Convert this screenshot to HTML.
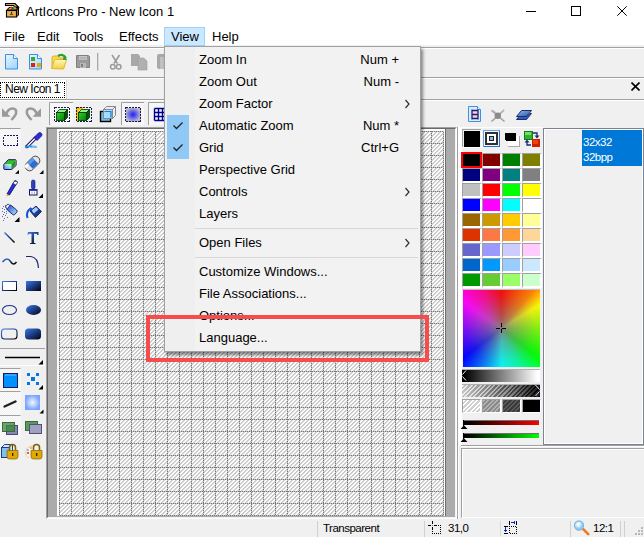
<!DOCTYPE html>
<html><head><meta charset="utf-8">
<style>
*{margin:0;padding:0;box-sizing:border-box}
html,body{width:644px;height:537px;overflow:hidden;background:#f0f0f0;font-family:"Liberation Sans",sans-serif;font-size:12px;color:#000;position:relative}
.a{position:absolute}
.t{position:absolute;white-space:nowrap;line-height:1}
.mi{position:absolute;left:199px;font-size:13px;white-space:nowrap;line-height:1}
.sc{position:absolute;font-size:13px;white-space:nowrap;line-height:1;text-align:right;right:245px}
.sw{position:absolute;width:20px;height:15px;border-top:1px solid #a0a0a0;border-left:1px solid #a0a0a0;border-right:2px solid #fff;border-bottom:2px solid #fff}
</style></head><body>
<div class="a" style="left:0;top:0;width:644px;height:45px;background:#fff"></div>
<svg class="a" style="left:0;top:0" width="24" height="22">
<path d="M5.5 3.5h9.5l3.5 3.5h-4l-1-1.5H5.5z" fill="#e0a848" stroke="#000" stroke-width="1.1"/>
<path d="M6.5 10.5l2.5-3h9.5l-2 3z" fill="#6a4a10" stroke="#000" stroke-width="1"/>
<circle cx="11.3" cy="7.5" r="1" fill="#ff2020"/><circle cx="13.6" cy="7.5" r="1" fill="#20d020"/><circle cx="10.3" cy="8.8" r="1" fill="#f0e000"/><circle cx="10.5" cy="9.7" r="0.9" fill="#f02020"/><circle cx="12.3" cy="9.5" r="1" fill="#2040ff"/><circle cx="15" cy="8" r="0.8" fill="#fff"/>
<path d="M16.5 10.5l2-3v7.5l-2 2z" fill="#b07818" stroke="#000" stroke-width="1"/>
<rect x="6.5" y="10.5" width="10" height="6.5" fill="#e8b050" stroke="#000" stroke-width="1.1"/>
<path d="M10.3 14.5q1.2-2.5 2.4 0z" fill="#e0e000" stroke="#000" stroke-width="0.6"/><circle cx="11.5" cy="12.3" r="0.6" fill="#000"/>
</svg>
<div class="t" style="left:26px;top:5px;font-size:13px">ArtIcons Pro - New Icon 1</div>
<!-- window controls -->
<div class="a" style="left:526px;top:11px;width:10px;height:1px;background:#000"></div>
<div class="a" style="left:571px;top:6px;width:10px;height:10px;border:1px solid #000"></div>
<svg class="a" style="left:617px;top:6px" width="10" height="10"><path d="M0.3 0.3L9.7 9.7M9.7 0.3L0.3 9.7" stroke="#000" stroke-width="1"/></svg>
<!-- menu -->
<div class="a" style="left:164px;top:27px;width:41px;height:19px;background:#cce8ff;border:1px solid #99d1ff"></div>
<div class="t" style="left:4px;top:30px;font-size:13px">File</div>
<div class="t" style="left:37px;top:30px;font-size:13px">Edit</div>
<div class="t" style="left:73px;top:30px;font-size:13px">Tools</div>
<div class="t" style="left:119px;top:30px;font-size:13px">Effects</div>
<div class="t" style="left:171px;top:30px;font-size:13px">View</div>
<div class="t" style="left:212px;top:30px;font-size:13px">Help</div>
<!-- lines -->
<div class="a" style="left:0;top:47px;width:644px;height:1px;background:#a0a0a0"></div>
<div class="a" style="left:0;top:48px;width:644px;height:1px;background:#fff"></div>
<div class="a" style="left:0;top:77px;width:644px;height:1px;background:#a0a0a0"></div>
<div class="a" style="left:0;top:78px;width:644px;height:1px;background:#fff"></div>
<div class="a" style="left:0;top:99px;width:644px;height:1px;background:#a0a0a0"></div>
<div class="a" style="left:0;top:100px;width:644px;height:1px;background:#fff"></div>
<!-- toolbar 1 icons -->
<svg class="a" style="left:0;top:48px" width="170" height="28">
<defs>
<linearGradient id="dg" x1="0" y1="0" x2="0.6" y2="1"><stop offset="0" stop-color="#e8f6ff"/><stop offset="1" stop-color="#a8d8ff"/></linearGradient>
<linearGradient id="fg" x1="0" y1="0" x2="0" y2="1"><stop offset="0" stop-color="#fff8c0"/><stop offset="1" stop-color="#f0d040"/></linearGradient>
</defs>
<path d="M5.5 6.5h8l4 4v10.5h-12z" fill="url(#dg)" stroke="#3a90e0"/>
<path d="M13.5 6.5v4h4" fill="#fff" stroke="#3a90e0"/>
<path d="M29.5 6.5h8l4 4v10.5h-12z" fill="url(#dg)" stroke="#3a90e0"/>
<path d="M37.5 6.5v4h4" fill="#fff" stroke="#3a90e0"/>
<rect x="31" y="9" width="4" height="4" fill="#30b030"/><rect x="31" y="15" width="4" height="4" fill="#e02010"/><rect x="37" y="15" width="4" height="4" fill="#e8a800"/>
<path d="M52 10q0-2 2-2h4l2 2h4v9.5H52z" fill="#f8d850" stroke="#e0b020"/>
<path d="M51.5 20.5l3-8q0.5-1 2-1h10l-3 9.5z" fill="url(#fg)" stroke="#e8b820"/>
<path d="M58 8q5-3 8 2" fill="none" stroke="#30a030" stroke-width="2.2"/><path d="M64 7l3 5-4 0z" fill="#30a030"/>
<path d="M76.5 7.5h12l1 1v11h-13z" fill="#9a9a9a" stroke="#808080"/>
<rect x="79" y="8" width="8" height="4" fill="#c8c8c8"/><path d="M79.5 9.5h7M79.5 11h7" stroke="#a0a0a0" stroke-width="0.6"/>
<rect x="80" y="15" width="6" height="5" fill="#b8b8b8"/><rect x="81" y="16" width="2" height="3" fill="#808080"/>
<rect x="97" y="5" width="1.3" height="17.5" fill="#a8a8a8"/>
<path d="M112 7l5.5 8.5M119.5 7l-5.5 8.5" stroke="#9a9a9a" stroke-width="1.6"/>
<circle cx="112.8" cy="18.8" r="2.3" fill="none" stroke="#9a9a9a" stroke-width="1.5"/><circle cx="118.7" cy="18.8" r="2.3" fill="none" stroke="#9a9a9a" stroke-width="1.5"/>
<path d="M131 6h7l2 2v10h-9z" fill="#a8a8a8"/><path d="M138 10h6l3 3v9h-9z" fill="#b0b0b0" stroke="#a0a0a0" stroke-width="0.6"/>
<path d="M157 8q0-2 2-2h8v15h-8q-2 0-2-2z" fill="#a8a8a8"/><rect x="160" y="9" width="5" height="12" fill="#c0c0c0"/>
</svg>
<!-- tab -->
<div class="a" style="left:0;top:80px;width:67px;height:19px;background:#fff;border-right:1px solid #d8d8d8"></div>
<div class="a" style="left:0;top:82px;width:65px;height:16px;border:1px dotted #000"></div>
<div class="t" style="left:5px;top:83px;font-size:12px;letter-spacing:-0.5px">New Icon 1</div>
<svg class="a" style="left:631px;top:82px" width="9" height="9"><path d="M0.5 0.5L8.5 8.5M8.5 0.5L0.5 8.5" stroke="#000" stroke-width="1.6"/></svg>
<!-- toolbar 2 -->
<svg class="a" style="left:0;top:100px" width="170" height="27">
<defs>
<pattern id="dith" width="2" height="2" patternUnits="userSpaceOnUse"><rect width="2" height="2" fill="#fbfbfb"/><rect width="1" height="1" fill="#f2f2f2"/><rect x="1" y="1" width="1" height="1" fill="#f2f2f2"/></pattern>
<radialGradient id="bd"><stop offset="0" stop-color="#2020ff"/><stop offset="0.35" stop-color="#5050f0"/><stop offset="1" stop-color="#b8b8c8"/></radialGradient>
<linearGradient id="cf" x1="0" y1="0" x2="1" y2="1"><stop offset="0" stop-color="#30d030"/><stop offset="1" stop-color="#008000"/></linearGradient>
</defs>
<path d="M2 8.2v8.5h8.5z" fill="#9a9a9a"/>
<path d="M6 14.5q2-6 6.5-6t3.5 5q-0.5 2-4.5 6.5" fill="none" stroke="#9a9a9a" stroke-width="2.6"/>
<path d="M41 8.2v8.5h-8.5z" fill="#9a9a9a"/>
<path d="M37 14.5q-2-6-6.5-6t-3.5 5q0.5 2 4.5 6.5" fill="none" stroke="#9a9a9a" stroke-width="2.6"/>
<rect x="49" y="2" width="24" height="23" fill="url(#dith)"/>
<path d="M49.5 25V2.5H73" fill="none" stroke="#a0a0a0"/>
<rect x="54.5" y="7.5" width="15" height="14" fill="none" stroke="#1a1a5a" stroke-dasharray="2 1" shape-rendering="crispEdges"/>
<path d="M56.5 12.5l3-3h8l-3 3z" fill="#90f090" stroke="#003000" stroke-width="0.8"/><path d="M64.5 12.5l3-3v8l-3 3z" fill="#005800" stroke="#003000" stroke-width="0.8"/><rect x="56.5" y="12.5" width="8" height="8" fill="url(#cf)" stroke="#003000" stroke-width="0.8"/>
<path d="M76 7h7v3h-4v11h-3z" fill="#ffc000"/>
<rect x="76.5" y="7.5" width="15" height="14" fill="none" stroke="#1a1a5a" stroke-dasharray="2 1" shape-rendering="crispEdges"/>
<path d="M78.5 12.5l3-3h8l-3 3z" fill="#90f090" stroke="#003000" stroke-width="0.8"/><path d="M86.5 12.5l3-3v8l-3 3z" fill="#005800" stroke="#003000" stroke-width="0.8"/><rect x="78.5" y="12.5" width="8" height="8" fill="url(#cf)" stroke="#003000" stroke-width="0.8"/>
<rect x="100.5" y="11.5" width="10" height="10" fill="#70b8f0" stroke="#000" stroke-width="1.4"/>
<path d="M103.5 9.5l3-3h9l-3 3z" fill="#f4e8f8" stroke="#888"/>
<path d="M112.5 9.5l3-3v9l-3 3z" fill="#e0f0ff" stroke="#888"/>
<rect x="103.5" y="9.5" width="9" height="9" fill="#a8e4ff" fill-opacity="0.9" stroke="#888"/>
<path d="M104.5 11.5h6.5v6" fill="none" stroke="#1a78e0" stroke-width="1.2"/>
<rect x="121" y="2" width="23" height="23" fill="url(#dith)"/>
<path d="M121.5 25V2.5H144" fill="none" stroke="#a0a0a0"/>
<rect x="125.5" y="7.5" width="15" height="14" fill="url(#bd)" stroke="#1a1a5a" stroke-dasharray="2 1" shape-rendering="crispEdges"/>
<rect x="148" y="2" width="22" height="23" fill="url(#dith)"/>
<path d="M148.5 25V2.5H170" fill="none" stroke="#a0a0a0"/>
<path d="M154.5 8.5v12M158.5 8.5v12M162.5 8.5v12M154.5 8.5h12M154.5 12.5h12M154.5 16.5h12M154.5 20.5h12" stroke="#000090" stroke-width="1.4" fill="none"/>
</svg>
<!-- canvas frame -->
<div class="a" style="left:46px;top:127px;width:411px;height:392px;border-top:1px solid #a0a0a0;border-left:1px solid #a0a0a0;border-right:1px solid #fff;border-bottom:1px solid #fff"></div>
<div class="a" style="left:47px;top:128px;width:409px;height:390px;background:#ababab;border-top:1px solid #696969;border-left:1px solid #696969;border-right:1px solid #f4f4f4;border-bottom:1px solid #f4f4f4"></div>
<div class="a" style="left:57px;top:129px;width:388px;height:387px;background:#fff"></div>
<div class="a" style="left:445px;top:129px;width:1px;height:387px;background:#6e6e6e"></div>
<svg class="a" style="left:59px;top:131px" width="385" height="385" shape-rendering="crispEdges">
<defs><pattern id="gp" width="24" height="24" patternUnits="userSpaceOnUse"><path fill="#c8c8c8" d="M1 4h1v1h-1zM1 8h1v1h-1zM1 16h1v1h-1zM1 20h1v1h-1zM2 3h1v1h-1zM2 7h1v1h-1zM2 11h1v1h-1zM2 15h1v1h-1zM2 19h1v1h-1zM2 23h1v1h-1zM3 2h1v1h-1zM3 6h1v1h-1zM3 10h1v1h-1zM3 14h1v1h-1zM3 18h1v1h-1zM3 22h1v1h-1zM4 1h1v1h-1zM4 5h1v1h-1zM4 9h1v1h-1zM4 13h1v1h-1zM4 17h1v1h-1zM4 21h1v1h-1zM5 4h1v1h-1zM5 8h1v1h-1zM5 16h1v1h-1zM5 20h1v1h-1zM6 3h1v1h-1zM6 7h1v1h-1zM6 11h1v1h-1zM6 15h1v1h-1zM6 19h1v1h-1zM6 23h1v1h-1zM7 2h1v1h-1zM7 6h1v1h-1zM7 10h1v1h-1zM7 14h1v1h-1zM7 18h1v1h-1zM7 22h1v1h-1zM8 1h1v1h-1zM8 5h1v1h-1zM8 9h1v1h-1zM8 13h1v1h-1zM8 17h1v1h-1zM8 21h1v1h-1zM9 4h1v1h-1zM9 8h1v1h-1zM9 16h1v1h-1zM9 20h1v1h-1zM10 3h1v1h-1zM10 7h1v1h-1zM10 11h1v1h-1zM10 15h1v1h-1zM10 19h1v1h-1zM10 23h1v1h-1zM11 2h1v1h-1zM11 6h1v1h-1zM11 10h1v1h-1zM11 14h1v1h-1zM11 18h1v1h-1zM11 22h1v1h-1zM13 4h1v1h-1zM13 8h1v1h-1zM13 16h1v1h-1zM13 20h1v1h-1zM14 3h1v1h-1zM14 7h1v1h-1zM14 11h1v1h-1zM14 15h1v1h-1zM14 19h1v1h-1zM14 23h1v1h-1zM15 2h1v1h-1zM15 6h1v1h-1zM15 10h1v1h-1zM15 14h1v1h-1zM15 18h1v1h-1zM15 22h1v1h-1zM16 1h1v1h-1zM16 5h1v1h-1zM16 9h1v1h-1zM16 13h1v1h-1zM16 17h1v1h-1zM16 21h1v1h-1zM17 4h1v1h-1zM17 8h1v1h-1zM17 16h1v1h-1zM17 20h1v1h-1zM18 3h1v1h-1zM18 7h1v1h-1zM18 11h1v1h-1zM18 15h1v1h-1zM18 19h1v1h-1zM18 23h1v1h-1zM19 2h1v1h-1zM19 6h1v1h-1zM19 10h1v1h-1zM19 14h1v1h-1zM19 18h1v1h-1zM19 22h1v1h-1zM20 1h1v1h-1zM20 5h1v1h-1zM20 9h1v1h-1zM20 13h1v1h-1zM20 17h1v1h-1zM20 21h1v1h-1zM21 4h1v1h-1zM21 8h1v1h-1zM21 16h1v1h-1zM21 20h1v1h-1zM22 3h1v1h-1zM22 7h1v1h-1zM22 11h1v1h-1zM22 15h1v1h-1zM22 19h1v1h-1zM22 23h1v1h-1zM23 2h1v1h-1zM23 6h1v1h-1zM23 10h1v1h-1zM23 14h1v1h-1zM23 18h1v1h-1zM23 22h1v1h-1z"/><path fill="#d2d2d2" d="M1 1h1v1h-1zM1 5h1v1h-1zM1 9h1v1h-1zM1 13h1v1h-1zM1 17h1v1h-1zM1 21h1v1h-1zM2 4h1v1h-1zM2 8h1v1h-1zM2 16h1v1h-1zM2 20h1v1h-1zM3 3h1v1h-1zM3 7h1v1h-1zM3 11h1v1h-1zM3 15h1v1h-1zM3 19h1v1h-1zM3 23h1v1h-1zM4 2h1v1h-1zM4 6h1v1h-1zM4 10h1v1h-1zM4 14h1v1h-1zM4 18h1v1h-1zM4 22h1v1h-1zM5 1h1v1h-1zM5 5h1v1h-1zM5 9h1v1h-1zM5 13h1v1h-1zM5 17h1v1h-1zM5 21h1v1h-1zM6 4h1v1h-1zM6 8h1v1h-1zM6 16h1v1h-1zM6 20h1v1h-1zM7 3h1v1h-1zM7 7h1v1h-1zM7 11h1v1h-1zM7 15h1v1h-1zM7 19h1v1h-1zM7 23h1v1h-1zM8 2h1v1h-1zM8 6h1v1h-1zM8 10h1v1h-1zM8 14h1v1h-1zM8 18h1v1h-1zM8 22h1v1h-1zM9 1h1v1h-1zM9 5h1v1h-1zM9 9h1v1h-1zM9 13h1v1h-1zM9 17h1v1h-1zM9 21h1v1h-1zM10 4h1v1h-1zM10 8h1v1h-1zM10 16h1v1h-1zM10 20h1v1h-1zM11 3h1v1h-1zM11 7h1v1h-1zM11 11h1v1h-1zM11 15h1v1h-1zM11 19h1v1h-1zM11 23h1v1h-1zM13 1h1v1h-1zM13 5h1v1h-1zM13 9h1v1h-1zM13 13h1v1h-1zM13 17h1v1h-1zM13 21h1v1h-1zM14 4h1v1h-1zM14 8h1v1h-1zM14 16h1v1h-1zM14 20h1v1h-1zM15 3h1v1h-1zM15 7h1v1h-1zM15 11h1v1h-1zM15 15h1v1h-1zM15 19h1v1h-1zM15 23h1v1h-1zM16 2h1v1h-1zM16 6h1v1h-1zM16 10h1v1h-1zM16 14h1v1h-1zM16 18h1v1h-1zM16 22h1v1h-1zM17 1h1v1h-1zM17 5h1v1h-1zM17 9h1v1h-1zM17 13h1v1h-1zM17 17h1v1h-1zM17 21h1v1h-1zM18 4h1v1h-1zM18 8h1v1h-1zM18 16h1v1h-1zM18 20h1v1h-1zM19 3h1v1h-1zM19 7h1v1h-1zM19 11h1v1h-1zM19 15h1v1h-1zM19 19h1v1h-1zM19 23h1v1h-1zM20 2h1v1h-1zM20 6h1v1h-1zM20 10h1v1h-1zM20 14h1v1h-1zM20 18h1v1h-1zM20 22h1v1h-1zM21 1h1v1h-1zM21 5h1v1h-1zM21 9h1v1h-1zM21 13h1v1h-1zM21 17h1v1h-1zM21 21h1v1h-1zM22 4h1v1h-1zM22 8h1v1h-1zM22 16h1v1h-1zM22 20h1v1h-1zM23 3h1v1h-1zM23 7h1v1h-1zM23 11h1v1h-1zM23 15h1v1h-1zM23 19h1v1h-1zM23 23h1v1h-1z"/><path fill="#fafafa" d="M1 2h1v1h-1zM1 6h1v1h-1zM1 10h1v1h-1zM1 14h1v1h-1zM1 18h1v1h-1zM1 22h1v1h-1zM2 1h1v1h-1zM2 5h1v1h-1zM2 9h1v1h-1zM2 13h1v1h-1zM2 17h1v1h-1zM2 21h1v1h-1zM3 4h1v1h-1zM3 8h1v1h-1zM3 16h1v1h-1zM3 20h1v1h-1zM4 3h1v1h-1zM4 7h1v1h-1zM4 11h1v1h-1zM4 15h1v1h-1zM4 19h1v1h-1zM4 23h1v1h-1zM5 2h1v1h-1zM5 6h1v1h-1zM5 10h1v1h-1zM5 14h1v1h-1zM5 18h1v1h-1zM5 22h1v1h-1zM6 1h1v1h-1zM6 5h1v1h-1zM6 9h1v1h-1zM6 13h1v1h-1zM6 17h1v1h-1zM6 21h1v1h-1zM7 4h1v1h-1zM7 8h1v1h-1zM7 16h1v1h-1zM7 20h1v1h-1zM8 3h1v1h-1zM8 7h1v1h-1zM8 11h1v1h-1zM8 15h1v1h-1zM8 19h1v1h-1zM8 23h1v1h-1zM9 2h1v1h-1zM9 6h1v1h-1zM9 10h1v1h-1zM9 14h1v1h-1zM9 18h1v1h-1zM9 22h1v1h-1zM10 1h1v1h-1zM10 5h1v1h-1zM10 9h1v1h-1zM10 13h1v1h-1zM10 17h1v1h-1zM10 21h1v1h-1zM11 4h1v1h-1zM11 8h1v1h-1zM11 16h1v1h-1zM11 20h1v1h-1zM13 2h1v1h-1zM13 6h1v1h-1zM13 10h1v1h-1zM13 14h1v1h-1zM13 18h1v1h-1zM13 22h1v1h-1zM14 1h1v1h-1zM14 5h1v1h-1zM14 9h1v1h-1zM14 13h1v1h-1zM14 17h1v1h-1zM14 21h1v1h-1zM15 4h1v1h-1zM15 8h1v1h-1zM15 16h1v1h-1zM15 20h1v1h-1zM16 3h1v1h-1zM16 7h1v1h-1zM16 11h1v1h-1zM16 15h1v1h-1zM16 19h1v1h-1zM16 23h1v1h-1zM17 2h1v1h-1zM17 6h1v1h-1zM17 10h1v1h-1zM17 14h1v1h-1zM17 18h1v1h-1zM17 22h1v1h-1zM18 1h1v1h-1zM18 5h1v1h-1zM18 9h1v1h-1zM18 13h1v1h-1zM18 17h1v1h-1zM18 21h1v1h-1zM19 4h1v1h-1zM19 8h1v1h-1zM19 16h1v1h-1zM19 20h1v1h-1zM20 3h1v1h-1zM20 7h1v1h-1zM20 11h1v1h-1zM20 15h1v1h-1zM20 19h1v1h-1zM20 23h1v1h-1zM21 2h1v1h-1zM21 6h1v1h-1zM21 10h1v1h-1zM21 14h1v1h-1zM21 18h1v1h-1zM21 22h1v1h-1zM22 1h1v1h-1zM22 5h1v1h-1zM22 9h1v1h-1zM22 13h1v1h-1zM22 17h1v1h-1zM22 21h1v1h-1zM23 4h1v1h-1zM23 8h1v1h-1zM23 16h1v1h-1zM23 20h1v1h-1z"/><path fill="#c4c4c4" d="M0 0h1v1h-1zM0 2h1v1h-1zM0 4h1v1h-1zM0 6h1v1h-1zM0 8h1v1h-1zM0 10h1v1h-1zM0 14h1v1h-1zM0 16h1v1h-1zM0 18h1v1h-1zM0 20h1v1h-1zM0 22h1v1h-1zM1 12h1v1h-1zM2 0h1v1h-1zM3 12h1v1h-1zM4 0h1v1h-1zM5 12h1v1h-1zM6 0h1v1h-1zM7 12h1v1h-1zM8 0h1v1h-1zM9 12h1v1h-1zM10 0h1v1h-1zM11 12h1v1h-1zM12 1h1v1h-1zM12 3h1v1h-1zM12 5h1v1h-1zM12 7h1v1h-1zM12 9h1v1h-1zM12 11h1v1h-1zM12 13h1v1h-1zM12 15h1v1h-1zM12 17h1v1h-1zM12 19h1v1h-1zM12 21h1v1h-1zM12 23h1v1h-1zM13 12h1v1h-1zM14 0h1v1h-1zM15 12h1v1h-1zM16 0h1v1h-1zM17 12h1v1h-1zM18 0h1v1h-1zM19 12h1v1h-1zM20 0h1v1h-1zM21 12h1v1h-1zM22 0h1v1h-1zM23 12h1v1h-1z"/><path fill="#767676" d="M0 1h1v1h-1zM0 3h1v1h-1zM0 5h1v1h-1zM0 7h1v1h-1zM0 9h1v1h-1zM0 11h1v1h-1zM0 12h1v1h-1zM0 13h1v1h-1zM0 15h1v1h-1zM0 17h1v1h-1zM0 19h1v1h-1zM0 21h1v1h-1zM0 23h1v1h-1zM1 0h1v1h-1zM2 12h1v1h-1zM3 0h1v1h-1zM4 12h1v1h-1zM5 0h1v1h-1zM6 12h1v1h-1zM7 0h1v1h-1zM8 12h1v1h-1zM9 0h1v1h-1zM10 12h1v1h-1zM11 0h1v1h-1zM12 0h1v1h-1zM12 2h1v1h-1zM12 4h1v1h-1zM12 6h1v1h-1zM12 8h1v1h-1zM12 10h1v1h-1zM12 12h1v1h-1zM12 14h1v1h-1zM12 16h1v1h-1zM12 18h1v1h-1zM12 20h1v1h-1zM12 22h1v1h-1zM13 0h1v1h-1zM14 12h1v1h-1zM15 0h1v1h-1zM16 12h1v1h-1zM17 0h1v1h-1zM18 12h1v1h-1zM19 0h1v1h-1zM20 12h1v1h-1zM21 0h1v1h-1zM22 12h1v1h-1zM23 0h1v1h-1z"/></pattern></defs>
<rect width="384" height="384" fill="url(#gp)"/>
<path fill="#c4c4c4" d="M0 384h1v1h-1zM2 384h1v1h-1zM4 384h1v1h-1zM6 384h1v1h-1zM8 384h1v1h-1zM10 384h1v1h-1zM12 384h1v1h-1zM14 384h1v1h-1zM16 384h1v1h-1zM18 384h1v1h-1zM20 384h1v1h-1zM22 384h1v1h-1zM24 384h1v1h-1zM26 384h1v1h-1zM28 384h1v1h-1zM30 384h1v1h-1zM32 384h1v1h-1zM34 384h1v1h-1zM36 384h1v1h-1zM38 384h1v1h-1zM40 384h1v1h-1zM42 384h1v1h-1zM44 384h1v1h-1zM46 384h1v1h-1zM48 384h1v1h-1zM50 384h1v1h-1zM52 384h1v1h-1zM54 384h1v1h-1zM56 384h1v1h-1zM58 384h1v1h-1zM60 384h1v1h-1zM62 384h1v1h-1zM64 384h1v1h-1zM66 384h1v1h-1zM68 384h1v1h-1zM70 384h1v1h-1zM72 384h1v1h-1zM74 384h1v1h-1zM76 384h1v1h-1zM78 384h1v1h-1zM80 384h1v1h-1zM82 384h1v1h-1zM84 384h1v1h-1zM86 384h1v1h-1zM88 384h1v1h-1zM90 384h1v1h-1zM92 384h1v1h-1zM94 384h1v1h-1zM96 384h1v1h-1zM98 384h1v1h-1zM100 384h1v1h-1zM102 384h1v1h-1zM104 384h1v1h-1zM106 384h1v1h-1zM108 384h1v1h-1zM110 384h1v1h-1zM112 384h1v1h-1zM114 384h1v1h-1zM116 384h1v1h-1zM118 384h1v1h-1zM120 384h1v1h-1zM122 384h1v1h-1zM124 384h1v1h-1zM126 384h1v1h-1zM128 384h1v1h-1zM130 384h1v1h-1zM132 384h1v1h-1zM134 384h1v1h-1zM136 384h1v1h-1zM138 384h1v1h-1zM140 384h1v1h-1zM142 384h1v1h-1zM144 384h1v1h-1zM146 384h1v1h-1zM148 384h1v1h-1zM150 384h1v1h-1zM152 384h1v1h-1zM154 384h1v1h-1zM156 384h1v1h-1zM158 384h1v1h-1zM160 384h1v1h-1zM162 384h1v1h-1zM164 384h1v1h-1zM166 384h1v1h-1zM168 384h1v1h-1zM170 384h1v1h-1zM172 384h1v1h-1zM174 384h1v1h-1zM176 384h1v1h-1zM178 384h1v1h-1zM180 384h1v1h-1zM182 384h1v1h-1zM184 384h1v1h-1zM186 384h1v1h-1zM188 384h1v1h-1zM190 384h1v1h-1zM192 384h1v1h-1zM194 384h1v1h-1zM196 384h1v1h-1zM198 384h1v1h-1zM200 384h1v1h-1zM202 384h1v1h-1zM204 384h1v1h-1zM206 384h1v1h-1zM208 384h1v1h-1zM210 384h1v1h-1zM212 384h1v1h-1zM214 384h1v1h-1zM216 384h1v1h-1zM218 384h1v1h-1zM220 384h1v1h-1zM222 384h1v1h-1zM224 384h1v1h-1zM226 384h1v1h-1zM228 384h1v1h-1zM230 384h1v1h-1zM232 384h1v1h-1zM234 384h1v1h-1zM236 384h1v1h-1zM238 384h1v1h-1zM240 384h1v1h-1zM242 384h1v1h-1zM244 384h1v1h-1zM246 384h1v1h-1zM248 384h1v1h-1zM250 384h1v1h-1zM252 384h1v1h-1zM254 384h1v1h-1zM256 384h1v1h-1zM258 384h1v1h-1zM260 384h1v1h-1zM262 384h1v1h-1zM264 384h1v1h-1zM266 384h1v1h-1zM268 384h1v1h-1zM270 384h1v1h-1zM272 384h1v1h-1zM274 384h1v1h-1zM276 384h1v1h-1zM278 384h1v1h-1zM280 384h1v1h-1zM282 384h1v1h-1zM284 384h1v1h-1zM286 384h1v1h-1zM288 384h1v1h-1zM290 384h1v1h-1zM292 384h1v1h-1zM294 384h1v1h-1zM296 384h1v1h-1zM298 384h1v1h-1zM300 384h1v1h-1zM302 384h1v1h-1zM304 384h1v1h-1zM306 384h1v1h-1zM308 384h1v1h-1zM310 384h1v1h-1zM312 384h1v1h-1zM314 384h1v1h-1zM316 384h1v1h-1zM318 384h1v1h-1zM320 384h1v1h-1zM322 384h1v1h-1zM324 384h1v1h-1zM326 384h1v1h-1zM328 384h1v1h-1zM330 384h1v1h-1zM332 384h1v1h-1zM334 384h1v1h-1zM336 384h1v1h-1zM338 384h1v1h-1zM340 384h1v1h-1zM342 384h1v1h-1zM344 384h1v1h-1zM346 384h1v1h-1zM348 384h1v1h-1zM350 384h1v1h-1zM352 384h1v1h-1zM354 384h1v1h-1zM356 384h1v1h-1zM358 384h1v1h-1zM360 384h1v1h-1zM362 384h1v1h-1zM364 384h1v1h-1zM366 384h1v1h-1zM368 384h1v1h-1zM370 384h1v1h-1zM372 384h1v1h-1zM374 384h1v1h-1zM376 384h1v1h-1zM378 384h1v1h-1zM380 384h1v1h-1zM382 384h1v1h-1zM384 384h1v1h-1zM384 0h1v1h-1zM384 2h1v1h-1zM384 4h1v1h-1zM384 6h1v1h-1zM384 8h1v1h-1zM384 10h1v1h-1zM384 12h1v1h-1zM384 14h1v1h-1zM384 16h1v1h-1zM384 18h1v1h-1zM384 20h1v1h-1zM384 22h1v1h-1zM384 24h1v1h-1zM384 26h1v1h-1zM384 28h1v1h-1zM384 30h1v1h-1zM384 32h1v1h-1zM384 34h1v1h-1zM384 36h1v1h-1zM384 38h1v1h-1zM384 40h1v1h-1zM384 42h1v1h-1zM384 44h1v1h-1zM384 46h1v1h-1zM384 48h1v1h-1zM384 50h1v1h-1zM384 52h1v1h-1zM384 54h1v1h-1zM384 56h1v1h-1zM384 58h1v1h-1zM384 60h1v1h-1zM384 62h1v1h-1zM384 64h1v1h-1zM384 66h1v1h-1zM384 68h1v1h-1zM384 70h1v1h-1zM384 72h1v1h-1zM384 74h1v1h-1zM384 76h1v1h-1zM384 78h1v1h-1zM384 80h1v1h-1zM384 82h1v1h-1zM384 84h1v1h-1zM384 86h1v1h-1zM384 88h1v1h-1zM384 90h1v1h-1zM384 92h1v1h-1zM384 94h1v1h-1zM384 96h1v1h-1zM384 98h1v1h-1zM384 100h1v1h-1zM384 102h1v1h-1zM384 104h1v1h-1zM384 106h1v1h-1zM384 108h1v1h-1zM384 110h1v1h-1zM384 112h1v1h-1zM384 114h1v1h-1zM384 116h1v1h-1zM384 118h1v1h-1zM384 120h1v1h-1zM384 122h1v1h-1zM384 124h1v1h-1zM384 126h1v1h-1zM384 128h1v1h-1zM384 130h1v1h-1zM384 132h1v1h-1zM384 134h1v1h-1zM384 136h1v1h-1zM384 138h1v1h-1zM384 140h1v1h-1zM384 142h1v1h-1zM384 144h1v1h-1zM384 146h1v1h-1zM384 148h1v1h-1zM384 150h1v1h-1zM384 152h1v1h-1zM384 154h1v1h-1zM384 156h1v1h-1zM384 158h1v1h-1zM384 160h1v1h-1zM384 162h1v1h-1zM384 164h1v1h-1zM384 166h1v1h-1zM384 168h1v1h-1zM384 170h1v1h-1zM384 172h1v1h-1zM384 174h1v1h-1zM384 176h1v1h-1zM384 178h1v1h-1zM384 180h1v1h-1zM384 182h1v1h-1zM384 184h1v1h-1zM384 186h1v1h-1zM384 188h1v1h-1zM384 190h1v1h-1zM384 192h1v1h-1zM384 194h1v1h-1zM384 196h1v1h-1zM384 198h1v1h-1zM384 200h1v1h-1zM384 202h1v1h-1zM384 204h1v1h-1zM384 206h1v1h-1zM384 208h1v1h-1zM384 210h1v1h-1zM384 212h1v1h-1zM384 214h1v1h-1zM384 216h1v1h-1zM384 218h1v1h-1zM384 220h1v1h-1zM384 222h1v1h-1zM384 224h1v1h-1zM384 226h1v1h-1zM384 228h1v1h-1zM384 230h1v1h-1zM384 232h1v1h-1zM384 234h1v1h-1zM384 236h1v1h-1zM384 238h1v1h-1zM384 240h1v1h-1zM384 242h1v1h-1zM384 244h1v1h-1zM384 246h1v1h-1zM384 248h1v1h-1zM384 250h1v1h-1zM384 252h1v1h-1zM384 254h1v1h-1zM384 256h1v1h-1zM384 258h1v1h-1zM384 260h1v1h-1zM384 262h1v1h-1zM384 264h1v1h-1zM384 266h1v1h-1zM384 268h1v1h-1zM384 270h1v1h-1zM384 272h1v1h-1zM384 274h1v1h-1zM384 276h1v1h-1zM384 278h1v1h-1zM384 280h1v1h-1zM384 282h1v1h-1zM384 284h1v1h-1zM384 286h1v1h-1zM384 288h1v1h-1zM384 290h1v1h-1zM384 292h1v1h-1zM384 294h1v1h-1zM384 296h1v1h-1zM384 298h1v1h-1zM384 300h1v1h-1zM384 302h1v1h-1zM384 304h1v1h-1zM384 306h1v1h-1zM384 308h1v1h-1zM384 310h1v1h-1zM384 312h1v1h-1zM384 314h1v1h-1zM384 316h1v1h-1zM384 318h1v1h-1zM384 320h1v1h-1zM384 322h1v1h-1zM384 324h1v1h-1zM384 326h1v1h-1zM384 328h1v1h-1zM384 330h1v1h-1zM384 332h1v1h-1zM384 334h1v1h-1zM384 336h1v1h-1zM384 338h1v1h-1zM384 340h1v1h-1zM384 342h1v1h-1zM384 344h1v1h-1zM384 346h1v1h-1zM384 348h1v1h-1zM384 350h1v1h-1zM384 352h1v1h-1zM384 354h1v1h-1zM384 356h1v1h-1zM384 358h1v1h-1zM384 360h1v1h-1zM384 362h1v1h-1zM384 364h1v1h-1zM384 366h1v1h-1zM384 368h1v1h-1zM384 370h1v1h-1zM384 372h1v1h-1zM384 374h1v1h-1zM384 376h1v1h-1zM384 378h1v1h-1zM384 380h1v1h-1zM384 382h1v1h-1zM384 384h1v1h-1z"/><path fill="#767676" d="M1 384h1v1h-1zM3 384h1v1h-1zM5 384h1v1h-1zM7 384h1v1h-1zM9 384h1v1h-1zM11 384h1v1h-1zM13 384h1v1h-1zM15 384h1v1h-1zM17 384h1v1h-1zM19 384h1v1h-1zM21 384h1v1h-1zM23 384h1v1h-1zM25 384h1v1h-1zM27 384h1v1h-1zM29 384h1v1h-1zM31 384h1v1h-1zM33 384h1v1h-1zM35 384h1v1h-1zM37 384h1v1h-1zM39 384h1v1h-1zM41 384h1v1h-1zM43 384h1v1h-1zM45 384h1v1h-1zM47 384h1v1h-1zM49 384h1v1h-1zM51 384h1v1h-1zM53 384h1v1h-1zM55 384h1v1h-1zM57 384h1v1h-1zM59 384h1v1h-1zM61 384h1v1h-1zM63 384h1v1h-1zM65 384h1v1h-1zM67 384h1v1h-1zM69 384h1v1h-1zM71 384h1v1h-1zM73 384h1v1h-1zM75 384h1v1h-1zM77 384h1v1h-1zM79 384h1v1h-1zM81 384h1v1h-1zM83 384h1v1h-1zM85 384h1v1h-1zM87 384h1v1h-1zM89 384h1v1h-1zM91 384h1v1h-1zM93 384h1v1h-1zM95 384h1v1h-1zM97 384h1v1h-1zM99 384h1v1h-1zM101 384h1v1h-1zM103 384h1v1h-1zM105 384h1v1h-1zM107 384h1v1h-1zM109 384h1v1h-1zM111 384h1v1h-1zM113 384h1v1h-1zM115 384h1v1h-1zM117 384h1v1h-1zM119 384h1v1h-1zM121 384h1v1h-1zM123 384h1v1h-1zM125 384h1v1h-1zM127 384h1v1h-1zM129 384h1v1h-1zM131 384h1v1h-1zM133 384h1v1h-1zM135 384h1v1h-1zM137 384h1v1h-1zM139 384h1v1h-1zM141 384h1v1h-1zM143 384h1v1h-1zM145 384h1v1h-1zM147 384h1v1h-1zM149 384h1v1h-1zM151 384h1v1h-1zM153 384h1v1h-1zM155 384h1v1h-1zM157 384h1v1h-1zM159 384h1v1h-1zM161 384h1v1h-1zM163 384h1v1h-1zM165 384h1v1h-1zM167 384h1v1h-1zM169 384h1v1h-1zM171 384h1v1h-1zM173 384h1v1h-1zM175 384h1v1h-1zM177 384h1v1h-1zM179 384h1v1h-1zM181 384h1v1h-1zM183 384h1v1h-1zM185 384h1v1h-1zM187 384h1v1h-1zM189 384h1v1h-1zM191 384h1v1h-1zM193 384h1v1h-1zM195 384h1v1h-1zM197 384h1v1h-1zM199 384h1v1h-1zM201 384h1v1h-1zM203 384h1v1h-1zM205 384h1v1h-1zM207 384h1v1h-1zM209 384h1v1h-1zM211 384h1v1h-1zM213 384h1v1h-1zM215 384h1v1h-1zM217 384h1v1h-1zM219 384h1v1h-1zM221 384h1v1h-1zM223 384h1v1h-1zM225 384h1v1h-1zM227 384h1v1h-1zM229 384h1v1h-1zM231 384h1v1h-1zM233 384h1v1h-1zM235 384h1v1h-1zM237 384h1v1h-1zM239 384h1v1h-1zM241 384h1v1h-1zM243 384h1v1h-1zM245 384h1v1h-1zM247 384h1v1h-1zM249 384h1v1h-1zM251 384h1v1h-1zM253 384h1v1h-1zM255 384h1v1h-1zM257 384h1v1h-1zM259 384h1v1h-1zM261 384h1v1h-1zM263 384h1v1h-1zM265 384h1v1h-1zM267 384h1v1h-1zM269 384h1v1h-1zM271 384h1v1h-1zM273 384h1v1h-1zM275 384h1v1h-1zM277 384h1v1h-1zM279 384h1v1h-1zM281 384h1v1h-1zM283 384h1v1h-1zM285 384h1v1h-1zM287 384h1v1h-1zM289 384h1v1h-1zM291 384h1v1h-1zM293 384h1v1h-1zM295 384h1v1h-1zM297 384h1v1h-1zM299 384h1v1h-1zM301 384h1v1h-1zM303 384h1v1h-1zM305 384h1v1h-1zM307 384h1v1h-1zM309 384h1v1h-1zM311 384h1v1h-1zM313 384h1v1h-1zM315 384h1v1h-1zM317 384h1v1h-1zM319 384h1v1h-1zM321 384h1v1h-1zM323 384h1v1h-1zM325 384h1v1h-1zM327 384h1v1h-1zM329 384h1v1h-1zM331 384h1v1h-1zM333 384h1v1h-1zM335 384h1v1h-1zM337 384h1v1h-1zM339 384h1v1h-1zM341 384h1v1h-1zM343 384h1v1h-1zM345 384h1v1h-1zM347 384h1v1h-1zM349 384h1v1h-1zM351 384h1v1h-1zM353 384h1v1h-1zM355 384h1v1h-1zM357 384h1v1h-1zM359 384h1v1h-1zM361 384h1v1h-1zM363 384h1v1h-1zM365 384h1v1h-1zM367 384h1v1h-1zM369 384h1v1h-1zM371 384h1v1h-1zM373 384h1v1h-1zM375 384h1v1h-1zM377 384h1v1h-1zM379 384h1v1h-1zM381 384h1v1h-1zM383 384h1v1h-1zM384 1h1v1h-1zM384 3h1v1h-1zM384 5h1v1h-1zM384 7h1v1h-1zM384 9h1v1h-1zM384 11h1v1h-1zM384 13h1v1h-1zM384 15h1v1h-1zM384 17h1v1h-1zM384 19h1v1h-1zM384 21h1v1h-1zM384 23h1v1h-1zM384 25h1v1h-1zM384 27h1v1h-1zM384 29h1v1h-1zM384 31h1v1h-1zM384 33h1v1h-1zM384 35h1v1h-1zM384 37h1v1h-1zM384 39h1v1h-1zM384 41h1v1h-1zM384 43h1v1h-1zM384 45h1v1h-1zM384 47h1v1h-1zM384 49h1v1h-1zM384 51h1v1h-1zM384 53h1v1h-1zM384 55h1v1h-1zM384 57h1v1h-1zM384 59h1v1h-1zM384 61h1v1h-1zM384 63h1v1h-1zM384 65h1v1h-1zM384 67h1v1h-1zM384 69h1v1h-1zM384 71h1v1h-1zM384 73h1v1h-1zM384 75h1v1h-1zM384 77h1v1h-1zM384 79h1v1h-1zM384 81h1v1h-1zM384 83h1v1h-1zM384 85h1v1h-1zM384 87h1v1h-1zM384 89h1v1h-1zM384 91h1v1h-1zM384 93h1v1h-1zM384 95h1v1h-1zM384 97h1v1h-1zM384 99h1v1h-1zM384 101h1v1h-1zM384 103h1v1h-1zM384 105h1v1h-1zM384 107h1v1h-1zM384 109h1v1h-1zM384 111h1v1h-1zM384 113h1v1h-1zM384 115h1v1h-1zM384 117h1v1h-1zM384 119h1v1h-1zM384 121h1v1h-1zM384 123h1v1h-1zM384 125h1v1h-1zM384 127h1v1h-1zM384 129h1v1h-1zM384 131h1v1h-1zM384 133h1v1h-1zM384 135h1v1h-1zM384 137h1v1h-1zM384 139h1v1h-1zM384 141h1v1h-1zM384 143h1v1h-1zM384 145h1v1h-1zM384 147h1v1h-1zM384 149h1v1h-1zM384 151h1v1h-1zM384 153h1v1h-1zM384 155h1v1h-1zM384 157h1v1h-1zM384 159h1v1h-1zM384 161h1v1h-1zM384 163h1v1h-1zM384 165h1v1h-1zM384 167h1v1h-1zM384 169h1v1h-1zM384 171h1v1h-1zM384 173h1v1h-1zM384 175h1v1h-1zM384 177h1v1h-1zM384 179h1v1h-1zM384 181h1v1h-1zM384 183h1v1h-1zM384 185h1v1h-1zM384 187h1v1h-1zM384 189h1v1h-1zM384 191h1v1h-1zM384 193h1v1h-1zM384 195h1v1h-1zM384 197h1v1h-1zM384 199h1v1h-1zM384 201h1v1h-1zM384 203h1v1h-1zM384 205h1v1h-1zM384 207h1v1h-1zM384 209h1v1h-1zM384 211h1v1h-1zM384 213h1v1h-1zM384 215h1v1h-1zM384 217h1v1h-1zM384 219h1v1h-1zM384 221h1v1h-1zM384 223h1v1h-1zM384 225h1v1h-1zM384 227h1v1h-1zM384 229h1v1h-1zM384 231h1v1h-1zM384 233h1v1h-1zM384 235h1v1h-1zM384 237h1v1h-1zM384 239h1v1h-1zM384 241h1v1h-1zM384 243h1v1h-1zM384 245h1v1h-1zM384 247h1v1h-1zM384 249h1v1h-1zM384 251h1v1h-1zM384 253h1v1h-1zM384 255h1v1h-1zM384 257h1v1h-1zM384 259h1v1h-1zM384 261h1v1h-1zM384 263h1v1h-1zM384 265h1v1h-1zM384 267h1v1h-1zM384 269h1v1h-1zM384 271h1v1h-1zM384 273h1v1h-1zM384 275h1v1h-1zM384 277h1v1h-1zM384 279h1v1h-1zM384 281h1v1h-1zM384 283h1v1h-1zM384 285h1v1h-1zM384 287h1v1h-1zM384 289h1v1h-1zM384 291h1v1h-1zM384 293h1v1h-1zM384 295h1v1h-1zM384 297h1v1h-1zM384 299h1v1h-1zM384 301h1v1h-1zM384 303h1v1h-1zM384 305h1v1h-1zM384 307h1v1h-1zM384 309h1v1h-1zM384 311h1v1h-1zM384 313h1v1h-1zM384 315h1v1h-1zM384 317h1v1h-1zM384 319h1v1h-1zM384 321h1v1h-1zM384 323h1v1h-1zM384 325h1v1h-1zM384 327h1v1h-1zM384 329h1v1h-1zM384 331h1v1h-1zM384 333h1v1h-1zM384 335h1v1h-1zM384 337h1v1h-1zM384 339h1v1h-1zM384 341h1v1h-1zM384 343h1v1h-1zM384 345h1v1h-1zM384 347h1v1h-1zM384 349h1v1h-1zM384 351h1v1h-1zM384 353h1v1h-1zM384 355h1v1h-1zM384 357h1v1h-1zM384 359h1v1h-1zM384 361h1v1h-1zM384 363h1v1h-1zM384 365h1v1h-1zM384 367h1v1h-1zM384 369h1v1h-1zM384 371h1v1h-1zM384 373h1v1h-1zM384 375h1v1h-1zM384 377h1v1h-1zM384 379h1v1h-1zM384 381h1v1h-1zM384 383h1v1h-1z"/>
</svg><!-- left palette -->
<svg class="a" style="left:0;top:125px" width="46" height="345">
<defs>
<linearGradient id="bl" x1="0" y1="0" x2="1" y2="1"><stop offset="0" stop-color="#3a78f0"/><stop offset="1" stop-color="#000010"/></linearGradient>
<linearGradient id="bls" x1="0" y1="0" x2="1" y2="1"><stop offset="0" stop-color="#3a78f0"/><stop offset="1" stop-color="#000"/></linearGradient>
<linearGradient id="ebl" x1="0" y1="0" x2="1" y2="1"><stop offset="0" stop-color="#e8f8ff"/><stop offset="1" stop-color="#60b0f0"/></linearGradient>
<linearGradient id="cap" x1="0" y1="0" x2="1" y2="0"><stop offset="0" stop-color="#3060d0"/><stop offset="1" stop-color="#a0d0ff"/></linearGradient>
</defs>
<!-- checked bg select -->
<rect x="0" y="4" width="21" height="23" fill="url(#dith)"/>
<path d="M0 3.5h20.5" stroke="#a0a0a0"/>
<rect x="3.5" y="10.5" width="14" height="10" fill="none" stroke="#1a1a5a" stroke-dasharray="2 1" shape-rendering="crispEdges"/>
<!-- dropper -->
<path d="M27 21.5l8.5-8.5" stroke="#14145a" stroke-width="3.4" stroke-linecap="round"/><path d="M27.3 21.2l8-8" stroke="#fff" stroke-width="1.4"/>
<path d="M34 12.5l4.5-4.5q1.5-1 2.5 0l0.5 0.5q1 1 0 2.5l-4.5 4.5z" fill="#2a2ae8" stroke="#14145a" stroke-width="0.8"/>
<path d="M25 22.5q3-1.5 6-1t6 0.5" stroke="#2098f0" stroke-width="1.8" fill="none"/><path d="M32 22h5" stroke="#a8d8f8" stroke-width="1.2"/>
<!-- eraser green -->
<defs><linearGradient id="ef" x1="0" y1="1" x2="1" y2="0"><stop offset="0" stop-color="#3a90f0"/><stop offset="1" stop-color="#d8f8ff"/></linearGradient></defs>
<path d="M3.8 39.5l4.5-4.8h7l-4 4.5z" fill="#30c030"/>
<path d="M11.3 39.2l4-4.5v5.5l-4.3 4.3z" fill="#10a010"/>
<path d="M3.8 39.5h7.5v5H4.2z" fill="url(#ef)"/>
<path d="M3.8 39.5l4.5-4.8h7.3l0.5 0.8v5l-4.5 4h-7.3l-0.5-0.5z" fill="none" stroke="#1c1c50" stroke-width="1"/>
<path d="M15 48.7h4v-3.7z" fill="#000"/>
<!-- eraser gray -->
<g transform="rotate(-45 32.5 38.5)"><rect x="24" y="34" width="17" height="9" rx="4.5" fill="#e4e4e4" stroke="#404040" stroke-width="0.9"/><rect x="29" y="34.5" width="7.5" height="8" fill="#2c6cd0"/><rect x="29" y="34.5" width="7.5" height="3" fill="#5a98e8"/><rect x="24.5" y="34.5" width="4.5" height="3" fill="#fff"/></g>
<path d="M39.5 49h4v-4z" fill="#000"/>
<!-- pencil -->
<path d="M7 69l7-12.5q1-1.5 2.5-0.5t0.5 2l-7.5 12z" fill="#2030e0" stroke="#101050" stroke-width="0.8"/>
<path d="M13.8 57.2q1-1.7 2.6-0.7t0.5 2l-1 1.5-3-1.8z" fill="#fff" stroke="#101050" stroke-width="0.6"/>
<path d="M7 69l-0.6 2.5 2.6-1.2z" fill="#f0b000"/>
<!-- brush -->
<rect x="31.5" y="55" width="3.5" height="9" rx="1.5" fill="#3040c0" stroke="#101060" stroke-width="0.6"/>
<rect x="29.5" y="64.5" width="7.5" height="5.5" fill="#fff" stroke="#101060"/><path d="M29.5 64.5h7.5v1.5h-7.5z" fill="#3040c0"/>
<path d="M32 66.5v3M34.5 66.5v3" stroke="#8080a0" stroke-width="0.7"/>
<path d="M38.5 73h4.5v-4.5z" fill="#000"/>
<!-- spray -->
<g transform="rotate(40 12 85)"><rect x="7" y="82" width="10" height="6" rx="1.5" fill="url(#cap)" stroke="#101060" stroke-width="0.8"/><rect x="5" y="83" width="2.5" height="4" fill="#fff" stroke="#101060" stroke-width="0.7"/></g>
<g fill="#4050c0" opacity="0.85"><rect x="5" y="80" width="1" height="1"/><rect x="3" y="81" width="1" height="1"/><rect x="5" y="82" width="1" height="1"/><rect x="2" y="83" width="1" height="1"/><rect x="4" y="84" width="1" height="1"/><rect x="2" y="86" width="1" height="1"/><rect x="4" y="87" width="1" height="1"/><rect x="3" y="89" width="1" height="1"/><rect x="5" y="90" width="1" height="1"/><rect x="2" y="91" width="1" height="1"/><rect x="4" y="93" width="1" height="1"/><rect x="7" y="92" width="1" height="1"/><rect x="6" y="86" width="1" height="1"/><rect x="6" y="88" width="1" height="1"/><rect x="3" y="95" width="1" height="1"/></g>
<path d="M14.5 97h5v-5z" fill="#000"/>
<!-- fill bucket -->
<path d="M30 86l6-5 5.5 5.5-6 6z" fill="#1a3a9a" stroke="#101050" stroke-width="0.8"/><path d="M31.5 85.5l4.5-3.5 2.5 2.5-4.5 4z" fill="#a0d0ff"/>
<path d="M27.5 93q-2-6 3-9.5l1.5 1" fill="none" stroke="#1050d0" stroke-width="2"/>
<!-- line -->
<path d="M4.5 107.5l10 10" stroke="url(#bls)" stroke-width="1.4"/>
<!-- T -->
<path d="M28 107h10.5v3h-1l-0.8-1.3h-2.7v9.3h1.5v1h-5.5v-1h1.5v-9.3h-2.7L28 110h-0.5z" fill="url(#bls)"/>
<!-- wave -->
<path d="M2.5 137q2.5-3 4.5-3t3.5 2.5 3 2.5 3-2" fill="none" stroke="url(#bls)" stroke-width="1.5"/>
<!-- arc -->
<path d="M26 131.5h5q7 1 7.5 11.5" fill="none" stroke="#1c2870" stroke-width="1.2"/>
<!-- rect -->
<rect x="2.5" y="156.5" width="14" height="9" fill="#fff" stroke="url(#bls)"/>
<rect x="26" y="156" width="15" height="10" fill="url(#bl)"/>
<!-- ellipse -->
<ellipse cx="9.5" cy="185" rx="7" ry="4.5" fill="none" stroke="#1c3490" stroke-width="1.1"/>
<ellipse cx="33.5" cy="185" rx="7.5" ry="5" fill="url(#bl)"/>
<!-- rounded rect -->
<rect x="1.5" y="204" width="15.5" height="10" rx="3" fill="none" stroke="url(#bls)" stroke-width="1.1"/>
<rect x="25" y="203.5" width="16" height="11" rx="3.5" fill="url(#bl)"/>
<!-- separator -->
<path d="M0 223.5h45" stroke="#a0a0a0"/>
<!-- line width -->
<path d="M5 232.5h35" stroke="#000" stroke-width="1.5"/><path d="M38.5 239.5h4.5v-4.5z" fill="#000"/>
<path d="M0 240.5h45" stroke="#fff"/>
<!-- checked group -->
<rect x="0" y="244" width="21" height="71" fill="url(#dith)"/>
<path d="M0 243.5h20.5M0 266.5h20.5M0 290.5h20.5" stroke="#a0a0a0"/>
<!-- blue square -->
<rect x="3.5" y="248.5" width="14" height="14" fill="#0090ff" stroke="#1a1a60"/>
<path d="M5 250h11" stroke="#60c0ff"/>
<!-- pattern -->
<g fill="#0078e8"><rect x="27" y="248" width="3" height="3"/><rect x="36" y="248" width="3" height="3"/><rect x="31" y="252" width="4" height="4"/><rect x="27" y="257" width="3" height="3"/><rect x="36" y="257" width="3" height="3"/></g>
<path d="M38.5 264.5h4.5v-4.5z" fill="#000"/>
<!-- thick line -->
<path d="M4.5 281.5l11-5" stroke="#202020" stroke-width="2.4" stroke-linecap="round"/>
<!-- gradient square -->
<defs><radialGradient id="gs"><stop offset="0" stop-color="#eef4ff"/><stop offset="0.5" stop-color="#b8d0ff"/><stop offset="1" stop-color="#7aa4ff"/></radialGradient></defs>
<rect x="25" y="270" width="15" height="15" fill="url(#gs)"/>
<path d="M39.5 288.5h4v-4z" fill="#000"/>
<!-- layers -->
<rect x="6.5" y="300.5" width="11" height="9" fill="#8888b0" stroke="#4a4a78"/>
<rect x="2.5" y="297.5" width="12" height="9" fill="#3a8a3a" fill-opacity="0.75" stroke="#3a6a3a"/>
<rect x="25.5" y="296.5" width="12" height="9" fill="#5a9a5a" stroke="#3a6a3a"/><rect x="29.5" y="299.5" width="12" height="9" fill="#a0a0c0" stroke="#505078"/>
<!-- locks -->
<path d="M1.5 322.5l3-3h8v10l-3 3h-8z" fill="#cfe8ff" stroke="#1c3c8c"/><rect x="1.5" y="322.5" width="8" height="10" fill="#80c0f0" stroke="#1c3c8c"/>
<path d="M9.5 325v-2.5q0-3 3-3t3 3v2.5" fill="none" stroke="#806000" stroke-width="1.6"/><path d="M7 325.5h11v6q0 2.5-2.5 2.5h-6q-2.5 0-2.5-2.5z" fill="#e0a800" stroke="#806000" stroke-width="0.7"/><rect x="12" y="328" width="1.3" height="3" fill="#302000"/>
<path d="M33 321q-6 0-7 5t3 7" fill="#fff8f0" stroke="#e8c8a8"/><circle cx="28" cy="328" r="1.1" fill="#e03020"/><circle cx="31" cy="323" r="1.1" fill="#f0a030"/><circle cx="28" cy="325" r="0.9" fill="#60a0e0"/>
<path d="M33.5 325v-2.5q0-3 3-3t3 3v2.5" fill="none" stroke="#806000" stroke-width="1.6"/><path d="M31 325.5h11v6q0 2.5-2.5 2.5h-6q-2.5 0-2.5-2.5z" fill="#e0a800" stroke="#806000" stroke-width="0.7"/><rect x="36" y="328" width="1.3" height="3" fill="#302000"/>
</svg>
<!-- right panel -->
<div class="a" style="left:457px;top:127px;width:1px;height:392px;background:#a0a0a0"></div>
<div class="a" style="left:458px;top:127px;width:1px;height:392px;background:#fff"></div>
<svg class="a" style="left:460px;top:100px" width="80" height="27">
<defs><linearGradient id="lg2" x1="0" y1="0" x2="1" y2="1"><stop offset="0" stop-color="#90c0f0"/><stop offset="1" stop-color="#2050a0"/></linearGradient></defs>
<path d="M8.5 6.5h9l3 3v12h-12z" fill="#d8eeff" stroke="#3d90e8"/><path d="M17.5 6.5v3h3" fill="#fff" stroke="#3d90e8"/>
<rect x="12" y="10" width="6" height="9" fill="#f8c8f0"/>
<path d="M12 9.5v10M18 9.5v10M12 10.5h6M12 14.5h6M12 18.5h6" stroke="#202060" stroke-width="1.3"/>
<path d="M31.5 10.5l13 11M44 10l-12.5 11.5" stroke="#a0a0a0" stroke-width="1.6"/>
<circle cx="37.8" cy="15.8" r="3.2" fill="#8a8a8a"/><path d="M32 10l4 3M44 10l-3 3" stroke="#b8b8b8" stroke-width="1.5"/>
<path d="M56.5 16.5l5-6h10l-5 6z" fill="url(#lg2)" stroke="#1c2c70"/>
<path d="M56.5 19.5l2.5-3h8l3-3h1.5l-5 6z" fill="#3060b8" stroke="#1c2c70"/>
</svg>
<!-- palette frame -->
<div class="a" style="left:458px;top:127px;width:85px;height:1px;background:#fff"></div>
<div class="a" style="left:458px;top:127px;width:4px;height:318px;background:#fff"></div>
<svg class="a" style="left:460px;top:127px" width="84" height="320" shape-rendering="crispEdges">
<!-- black sunken -->
<rect x="2" y="2" width="20" height="19" fill="#fff"/>
<rect x="2" y="2" width="19" height="18" fill="#a0a0a0"/>
<rect x="3" y="3" width="18" height="17" fill="#f0f0f0"/>
<rect x="4" y="4" width="16" height="16" fill="#000"/>
<!-- blue selected -->
<rect x="23" y="3" width="17" height="17" fill="#2c6cd0"/><rect x="23" y="3" width="17" height="1" fill="#6aa0e8"/><rect x="23" y="3" width="1" height="17" fill="#6aa0e8"/>
<rect x="24" y="4" width="15" height="15" fill="#f0f8ff"/>
<rect x="25" y="5" width="13" height="13" fill="#303030"/>
<rect x="27" y="7" width="9" height="9" fill="#fff"/>
<rect x="29" y="9" width="5" height="5" fill="#202020"/>
<rect x="30" y="10" width="3" height="3" fill="#80b8f0"/>
<!-- bw -->
<rect x="48" y="9" width="12" height="11" fill="#a8a8a8"/><rect x="48" y="9" width="11" height="10" fill="#fff"/>
<path d="M45 6h10l1 1v6l-1 1H46l-1-1z" fill="#000"/>
<!-- swap -->
<rect x="64" y="4" width="8" height="8" fill="#30b030"/><rect x="65" y="5" width="6" height="3" fill="#70e070"/><path d="M64 4h8v8h-8z" fill="none" stroke="#108010"/>
<rect x="72" y="12" width="8" height="8" fill="#d02000"/><rect x="73" y="13" width="5" height="4" fill="#f04010"/>
<path d="M73 6h4v3" fill="none" stroke="#1a2a70" stroke-width="1.3" shape-rendering="auto"/><path d="M74.5 8.5h5l-2.5 3z" fill="#1a2a70" shape-rendering="auto"/>
<path d="M71 18h-4v-3" fill="none" stroke="#1a2a70" stroke-width="1.3" shape-rendering="auto"/><path d="M64.5 15.5h5l-2.5-3z" fill="#1a2a70" shape-rendering="auto"/>
</svg>
<div class="sw" style="left:462px;top:153px;background:#000000"></div>
<div class="sw" style="left:482px;top:153px;background:#800000"></div>
<div class="sw" style="left:502px;top:153px;background:#008000"></div>
<div class="sw" style="left:522px;top:153px;background:#808000"></div>
<div class="sw" style="left:462px;top:168px;background:#000080"></div>
<div class="sw" style="left:482px;top:168px;background:#800080"></div>
<div class="sw" style="left:502px;top:168px;background:#008080"></div>
<div class="sw" style="left:522px;top:168px;background:#808080"></div>
<div class="sw" style="left:462px;top:183px;background:#c0c0c0"></div>
<div class="sw" style="left:482px;top:183px;background:#ff0000"></div>
<div class="sw" style="left:502px;top:183px;background:#00ff00"></div>
<div class="sw" style="left:522px;top:183px;background:#ffff00"></div>
<div class="sw" style="left:462px;top:198px;background:#0000ff"></div>
<div class="sw" style="left:482px;top:198px;background:#ff00ff"></div>
<div class="sw" style="left:502px;top:198px;background:#00ffff"></div>
<div class="sw" style="left:522px;top:198px;background:#ffffff"></div>
<div class="sw" style="left:462px;top:213px;background:#996600"></div>
<div class="sw" style="left:482px;top:213px;background:#cc9900"></div>
<div class="sw" style="left:502px;top:213px;background:#ffcc00"></div>
<div class="sw" style="left:522px;top:213px;background:#ffff99"></div>
<div class="sw" style="left:462px;top:228px;background:#dd3300"></div>
<div class="sw" style="left:482px;top:228px;background:#ff7744"></div>
<div class="sw" style="left:502px;top:228px;background:#ff9933"></div>
<div class="sw" style="left:522px;top:228px;background:#ffd699"></div>
<div class="sw" style="left:462px;top:243px;background:#6666cc"></div>
<div class="sw" style="left:482px;top:243px;background:#9999ff"></div>
<div class="sw" style="left:502px;top:243px;background:#ccccff"></div>
<div class="sw" style="left:522px;top:243px;background:#ffccff"></div>
<div class="sw" style="left:462px;top:258px;background:#0066cc"></div>
<div class="sw" style="left:482px;top:258px;background:#0099ff"></div>
<div class="sw" style="left:502px;top:258px;background:#99ccff"></div>
<div class="sw" style="left:522px;top:258px;background:#cce8ff"></div>
<div class="sw" style="left:462px;top:273px;background:#009900"></div>
<div class="sw" style="left:482px;top:273px;background:#66cc33"></div>
<div class="sw" style="left:502px;top:273px;background:#99ff66"></div>
<div class="sw" style="left:522px;top:273px;background:#ccffcc"></div>
<div class="a" style="left:461px;top:152px;width:21px;height:16px;border:2px solid #f00"></div>
<!-- color wheel -->
<div class="a" style="left:462px;top:289px;width:78px;height:1px;background:#c0c0c0"></div>
<div class="a" style="left:463px;top:290px;width:77px;height:77px;background:radial-gradient(circle at 50% 50%,rgba(128,128,128,0.95) 0,rgba(128,128,128,0.55) 14px,rgba(128,128,128,0.15) 34px,rgba(128,128,128,0) 50px),conic-gradient(from 0deg,#f00,#ff8000 40deg,#ff0 58deg,#80ff00 90deg,#0f0 128deg,#0fa 155deg,#0ff 180deg,#0080ff 205deg,#00f 232deg,#8000ff 270deg,#f0f 305deg,#ff0080 335deg,#f00 360deg)"></div>
<svg class="a" style="left:496px;top:323px" width="11" height="11" shape-rendering="crispEdges"><path d="M5 0h1v4H5zM5 6h1v4H5zM0 5h4v1H0zM6 5h4v1H6z" fill="#000"/></svg>
<!-- gray gradient -->
<div class="a" style="left:462px;top:369px;width:78px;height:13px;background:linear-gradient(90deg,#000 3%,#fff 97%);border-top:1px solid #b0b0b0"></div>
<svg class="a" style="left:462px;top:369px" width="78" height="13"><path d="M0.5 5.5L4 1.5M0.5 7.5L4 11.5" fill="none" stroke="#f0f0f0" stroke-width="1"/></svg>
<!-- hatched gradient -->
<div class="a" style="left:462px;top:384px;width:78px;height:13px;background:linear-gradient(90deg,#c4c4c4,#000 95%);border-top:1px solid #b0b0b0"></div>
<div class="a" style="left:462px;top:385px;width:78px;height:12px;background:repeating-linear-gradient(135deg,rgba(255,255,255,0.75) 0 1.6px,rgba(255,255,255,0) 1.6px 3.2px);-webkit-mask-image:linear-gradient(90deg,#000,rgba(0,0,0,0.15))"></div>
<svg class="a" style="left:462px;top:384px" width="78" height="13"><path d="M73.5 1l4 4.5M73.5 12l4-4.5" fill="none" stroke="#f0f0f0" stroke-width="1"/></svg>
<!-- 4 squares -->
<div class="a" style="left:462px;top:399px;width:19px;height:14px;border-top:1px solid #a0a0a0;border-left:1px solid #a0a0a0;border-right:1px solid #fff;border-bottom:1px solid #fff;background:repeating-linear-gradient(135deg,#fff 0 1.6px,#cfcfcf 1.6px 3.2px)"></div>
<div class="a" style="left:482px;top:399px;width:19px;height:14px;border-top:1px solid #a0a0a0;border-left:1px solid #a0a0a0;border-right:1px solid #fff;border-bottom:1px solid #fff;background:repeating-linear-gradient(135deg,#b4b4b4 0 1.6px,#8a8a8a 1.6px 3.2px)"></div>
<div class="a" style="left:502px;top:399px;width:19px;height:14px;border-top:1px solid #a0a0a0;border-left:1px solid #a0a0a0;border-right:1px solid #fff;border-bottom:1px solid #fff;background:repeating-linear-gradient(135deg,#5a5a5a 0 1.6px,#3a3a3a 1.6px 3.2px)"></div>
<div class="a" style="left:522px;top:399px;width:19px;height:14px;border-top:1px solid #a0a0a0;border-left:1px solid #a0a0a0;border-right:1px solid #fff;border-bottom:1px solid #fff;background:#000"></div>
<!-- sliders -->
<div class="a" style="left:463px;top:420px;width:76px;height:5px;background:linear-gradient(90deg,#000 5%,#f00);border-top:1px solid #707070"></div>
<div class="a" style="left:463px;top:420px;width:1px;height:6px;background:#000"></div>
<svg class="a" style="left:460px;top:425px" width="8" height="4"><path d="M0.5 4L4 0.3 7.5 4z" fill="#000"/></svg>
<div class="a" style="left:463px;top:433px;width:76px;height:5px;background:linear-gradient(90deg,#000 5%,#0f0);border-top:1px solid #707070"></div>
<div class="a" style="left:463px;top:433px;width:1px;height:6px;background:#000"></div>
<svg class="a" style="left:460px;top:438px" width="8" height="4"><path d="M0.5 4L4 0.3 7.5 4z" fill="#000"/></svg>
<!-- preview frame -->
<div class="a" style="left:543px;top:128px;width:101px;height:317px;border:1px solid #7c8490"></div>
<div class="a" style="left:544px;top:129px;width:99px;height:315px;border:1px solid #fff"></div>
<div class="a" style="left:582px;top:130px;width:60px;height:36px;background:#0078d7"></div>
<div class="t" style="left:583px;top:135px;color:#fff;font-size:11.5px;line-height:15px;letter-spacing:-0.5px">32x32<br>32bpp</div>
<!-- lower panel -->
<div class="a" style="left:461px;top:445px;width:183px;height:1px;background:#a0a0a0"></div>
<div class="a" style="left:461px;top:446px;width:183px;height:1px;background:#fff"></div>
<div class="a" style="left:461px;top:448px;width:183px;height:70px;border-top:1px solid #a0a0a0;border-left:1px solid #a0a0a0;border-bottom:1px solid #fff"></div>
<div class="a" style="left:462px;top:449px;width:182px;height:68px;border-top:1px solid #fff;border-left:1px solid #fff"></div>
<!-- status bar -->
<div class="a" style="left:317px;top:521px;width:1px;height:16px;background:#d0d0d0"></div>
<div class="t" style="left:323px;top:523px;font-size:11.5px;letter-spacing:-0.5px">Transparent</div>
<div class="a" style="left:424px;top:521px;width:1px;height:16px;background:#d0d0d0"></div>

<div class="t" style="left:448px;top:523px;font-size:11.5px;letter-spacing:-0.5px">31,0</div>
<div class="a" style="left:500px;top:521px;width:1px;height:15px;background:#d8d8d8"></div>
<svg class="a" style="left:0;top:0" width="644" height="537" shape-rendering="crispEdges">
<path fill="#000" d="M432 521h1v3h-1zM432 527h1v3h-1zM428 525h3v1h-3zM434 525h3v1h-3zM438 525h1v1h-1zM440 525h1v1h-1zM440 527h1v1h-1zM440 529h1v1h-1zM440 531h1v1h-1zM440 533h1v1h-1zM432 533h1v1h-1zM434 533h1v1h-1zM436 533h1v1h-1zM438 533h1v1h-1zM432 531h1v1h-1zM509 521h1v4h-1zM516 521h1v4h-1zM504 526h4v1h-4zM504 533h4v1h-4zM509 526h1v1h-1zM511 526h1v1h-1zM513 526h1v1h-1zM515 526h1v1h-1zM516 527h1v1h-1zM516 529h1v1h-1zM516 531h1v1h-1zM516 533h1v1h-1zM510 533h1v1h-1zM512 533h1v1h-1zM514 533h1v1h-1zM509 528h1v1h-1zM509 530h1v1h-1zM509 532h1v1h-1z"/><path fill="#7a7a7a" d="M432 525h1v1h-1z"/><path fill="#0030c0" d="M511 522h4v1h-4zM514 521h1v3h-1zM505 527h1v5h-1zM504 530h3v1h-3z"/>
</svg>
<div class="a" style="left:570px;top:521px;width:1px;height:16px;background:#d0d0d0"></div>
<svg class="a" style="left:570px;top:518px" width="20" height="19">
<defs><radialGradient id="lens" cx="0.4" cy="0.35"><stop offset="0" stop-color="#ffffff"/><stop offset="0.5" stop-color="#c8e8ff"/><stop offset="1" stop-color="#90c8f0"/></radialGradient></defs>
<path d="M13.2 11.2l5 5" stroke="#f07820" stroke-width="2.6" stroke-linecap="round"/>
<circle cx="9" cy="7.5" r="4.6" fill="url(#lens)" stroke="#7ab8e8" stroke-width="1.1"/>
<path d="M7 6l3 3M8.5 5l2 2" stroke="#fff" stroke-width="0.9"/>
</svg>
<div class="t" style="left:593px;top:523px;font-size:11.5px;letter-spacing:-0.5px">12:1</div>
<div class="a" style="left:620px;top:521px;width:1px;height:16px;background:#d0d0d0"></div>
<div class="a" style="left:624px;top:521px;width:1px;height:16px;background:#d0d0d0"></div>
<svg class="a" style="left:635px;top:524px" width="9" height="12" shape-rendering="crispEdges">
<path d="M6 3h2v2H6zM3 6h2v2H3zM6 6h2v2H6zM0 9h2v2H0zM3 9h2v2H3zM6 9h2v2H6z" fill="#b8b8b8"/>
</svg>
<!-- dropdown -->
<div class="a" style="left:164px;top:46px;width:257px;height:306px;background:#f2f2f2;border:1px solid #a0a0a0;box-shadow:2px 3px 3px rgba(0,0,0,0.45)"></div>
<div class="a" style="left:165px;top:47px;width:30px;height:304px;background:#efefef"></div>
<div class="a" style="left:167px;top:115px;width:22px;height:44px;background:#90c8f6"></div>
<svg class="a" style="left:167px;top:115px" width="22" height="44"><path d="M6.5 10.5l3 3 6-6M6.5 32.5l3 3 6-6" fill="none" stroke="#202020" stroke-width="1.3"/></svg>
<div class="mi" style="top:53px">Zoom In</div><div class="sc" style="top:53px">Num +</div>
<div class="mi" style="top:75px">Zoom Out</div><div class="sc" style="top:75px">Num -</div>
<div class="mi" style="top:97px">Zoom Factor</div>
<div class="mi" style="top:119px">Automatic Zoom</div><div class="sc" style="top:119px">Num *</div>
<div class="mi" style="top:141px">Grid</div><div class="sc" style="top:141px">Ctrl+G</div>
<div class="mi" style="top:163px">Perspective Grid</div>
<div class="mi" style="top:185px">Controls</div>
<div class="mi" style="top:207px">Layers</div>
<div class="a" style="left:195px;top:228px;width:223px;height:1px;background:#d7d7d7"></div>
<div class="mi" style="top:236px">Open Files</div>
<div class="a" style="left:195px;top:257px;width:223px;height:1px;background:#d7d7d7"></div>
<div class="mi" style="top:265px">Customize Windows...</div>
<div class="mi" style="top:287px">File Associations...</div>
<div class="mi" style="top:309px">Options...</div>
<div class="mi" style="top:331px">Language...</div>
<svg class="a" style="left:403px;top:99px" width="8" height="160"><path d="M2.5 1l3.5 4-3.5 4M2.5 89l3.5 4-3.5 4M2.5 140l3.5 4-3.5 4" fill="none" stroke="#303030" stroke-width="1.2"/></svg>
<!-- red annotation -->
<div class="a" style="left:146px;top:315px;width:283px;height:47px;border:4px solid #f54c4c"></div>
</body></html>
